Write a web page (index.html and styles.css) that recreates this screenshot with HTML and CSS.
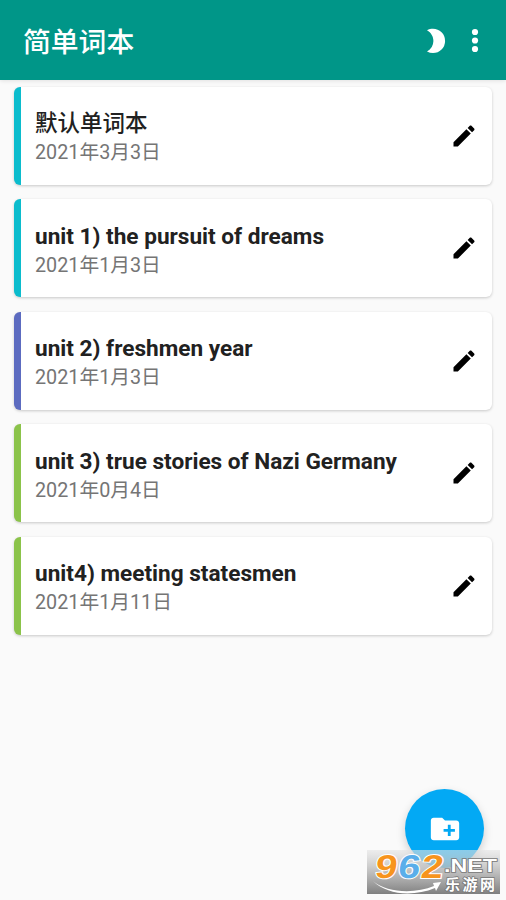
FILE: index.html
```html
<!DOCTYPE html>
<html lang="zh-CN">
<head>
<meta charset="utf-8">
<title>简单词本</title>
<link rel="stylesheet" href="styles.css">
</head>
<body>
<svg class="defs" width="0" height="0" aria-hidden="true">
  <symbol id="pencil" viewBox="0 0 24 24"><path d="M3 17.25V21h3.75L17.81 9.94l-3.75-3.75L3 17.25zM20.71 7.04c.39-.39.39-1.02 0-1.41l-2.34-2.34c-.39-.39-1.02-.39-1.41 0l-1.83 1.83 3.75 3.75 1.83-1.83z"/></symbol>
</svg>
<header class="bar">
  <h1 class="bar-title">简单词本</h1>
  <svg class="moon" viewBox="0 0 20 26"><path d="M1 2.2C3 1.1 5 .8 7 .8a12 12 0 0 1 0 24.200C5 25 3 24.500 1 23.500C5.200 21 7.400 17.200 7.400 12.900S5.200 4.700 1 2.200z"/></svg>
  <svg class="dots" viewBox="0 0 8 26"><circle cx="4" cy="4" r="3.100"/><circle cx="4" cy="12.500" r="3.100"/><circle cx="4" cy="21" r="3.100"/></svg>
</header>
<main class="list">
  <article class="card cyan"><div class="info"><h2 class="name cjk">默认单词本</h2><p class="date">2021年3月3日</p></div><svg class="edit"><use href="#pencil"/></svg></article>
  <article class="card cyan"><div class="info"><h2 class="name">unit 1) the pursuit of dreams</h2><p class="date">2021年1月3日</p></div><svg class="edit"><use href="#pencil"/></svg></article>
  <article class="card indigo"><div class="info"><h2 class="name">unit 2) freshmen year</h2><p class="date">2021年1月3日</p></div><svg class="edit"><use href="#pencil"/></svg></article>
  <article class="card green"><div class="info"><h2 class="name">unit 3) true stories of Nazi Germany</h2><p class="date">2021年0月4日</p></div><svg class="edit"><use href="#pencil"/></svg></article>
  <article class="card green"><div class="info"><h2 class="name">unit4) meeting statesmen</h2><p class="date">2021年1月11日</p></div><svg class="edit"><use href="#pencil"/></svg></article>
</main>
<button class="fab" aria-label="新建">
  <svg class="folder" viewBox="0 0 24 24"><path d="M20 6h-8l-2-2H4c-1.110 0-1.990.89-1.990 2L2 18c0 1.110.89 2 2 2h16c1.110 0 2-.89 2-2V8c0-1.110-.89-2-2-2zm-1 8h-3v3h-2v-3h-3v-2h3V9h2v3h3v2z"/></svg>
</button>
<svg class="mark" viewBox="0 0 133 44">
  <defs>
    <linearGradient id="shade" x1="0" y1="0" x2="0" y2="1"><stop offset="0" stop-color="#e4e4e4" stop-opacity=".6"/><stop offset=".5" stop-color="#b4b4b4" stop-opacity=".85"/><stop offset="1" stop-color="#7c7c7c" stop-opacity=".97"/></linearGradient>
  </defs>
  <rect width="133" height="44" fill="url(#shade)"/>
  <path class="swoosh" d="M6 31C20 43 48 44 67 36L66 33L74 32L69 41L68 38C46 47 20 45 6 31z"/>
  <text class="digits" transform="translate(0 28) skewX(-8)" y="0"><tspan class="orange" x="7" textLength="22" lengthAdjust="spacingAndGlyphs">9</tspan><tspan class="blue" x="30" textLength="22" lengthAdjust="spacingAndGlyphs">6</tspan><tspan class="orange" x="53" textLength="22" lengthAdjust="spacingAndGlyphs">2</tspan></text>
  <text class="net" x="77" y="21.500" textLength="53" lengthAdjust="spacingAndGlyphs">.NET</text>
  <text class="site" x="78" y="39.500" textLength="50">乐游网</text>
</svg>
</body>
</html>
```
FILE: styles.css
```css
* { box-sizing: border-box; }
body {
  margin: 0;
  height: 900px;
  overflow: hidden;
  background: #fafafa;
  font-family: Roboto, "Noto Sans CJK SC", sans-serif;
}
h1, h2, p { margin: 0; }
.defs { position: absolute; }
.bar {
  display: flex;
  align-items: center;
  height: 80px;
  padding: 2px 27px 0 23px;
  background: #009688;
  color: #fff;
  box-shadow: 0 1px 4px rgba(0, 0, 0, .1);
}
.bar-title {
  flex: 1;
  padding-top: 4px;
  font-size: 27.8px;
  font-weight: 500;
  line-height: 40px;
}
.moon { width: 20px; height: 26px; margin-right: 25px; fill: #fff; }
.dots { width: 8px; height: 26px; fill: #fff; }
.list {
  display: flex;
  flex-direction: column;
  gap: 14.5px;
  padding: 6.6px 14px 0;
}
.card {
  display: flex;
  align-items: center;
  height: 98px;
  padding: 0 14px;
  border-left: 7px solid;
  border-radius: 6px;
  background: #fff;
  box-shadow: 0 1px 3px rgba(0, 0, 0, .2);
}
.cyan { border-color: #0bbccd; }
.indigo { border-color: #5c6bc0; }
.green { border-color: #8bc34a; }
.info { flex: 1; padding-top: 5px; }
.name {
  color: #212121;
  font-size: 22.6px;
  font-weight: 700;
  line-height: 29px;
}
.cjk { font-size: 22.5px; font-weight: 500; }
.date {
  color: #757575;
  font-size: 19.75px;
  line-height: 29px;
}
.edit { width: 28px; height: 28px; fill: #000; }
.fab {
  position: absolute;
  left: 405px;
  top: 789px;
  width: 79px;
  height: 79px;
  display: flex;
  align-items: center;
  justify-content: center;
  padding: 0;
  border: 0;
  border-radius: 50%;
  background: #03a9f4;
  box-shadow: 0 4px 10px rgba(0, 0, 0, .18);
}
.folder { width: 34px; height: 34px; fill: #fff; }
.mark { position: absolute; left: 367px; top: 850px; width: 133px; height: 44px; overflow: visible; }
.digits {
  font: 700 33px "Liberation Sans", sans-serif;
  stroke: #fff;
  stroke-width: 2px;
  paint-order: stroke;
}
.orange { fill: #f7941d; }
.blue { fill: #5aaeea; }
.swoosh { fill: #fff; }
.net, .site { fill: #fff; stroke: #777; stroke-width: 1.500px; paint-order: stroke; }
.net { font: 700 18px "Liberation Sans", sans-serif; }
.site { font: 700 15px "Noto Sans CJK SC", sans-serif; }
```
